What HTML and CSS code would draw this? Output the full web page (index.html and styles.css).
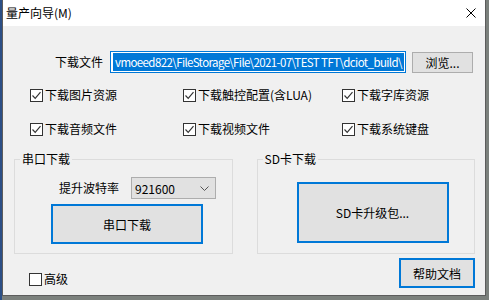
FILE: index.html
```html
<!DOCTYPE html>
<html lang="zh-CN">
<head>
<meta charset="utf-8">
<title>量产向导</title>
<link rel="stylesheet" href="styles.css">
</head>
<body>
<div class="window">
  <div class="titlebar">
    <span class="title">量产向导(M)</span>
    <svg class="close" width="10" height="10" viewBox="0 0 10 10"><path d="M0.5 0.5 L9.5 9.5 M9.5 0.5 L0.5 9.5" stroke="#000" stroke-width="1" fill="none"/></svg>
  </div>
  <div class="content">
    <div class="file-row">
      <span class="file-label">下载文件</span>
      <div class="file-input"><span class="sel">vmoeed822\FileStorage\File\2021-07\TEST TFT\dciot_build\</span></div>
      <div class="btn browse">浏览...</div>
    </div>
    <div class="checks">
      <label class="check"><span class="box checked"><svg width="11" height="11" viewBox="0 0 11 11"><path d="M1.5 5.5 L4.2 8.3 L9.5 2.2" stroke="#333" stroke-width="1.2" fill="none"/></svg></span>下载图片资源</label>
      <label class="check"><span class="box checked"><svg width="11" height="11" viewBox="0 0 11 11"><path d="M1.5 5.5 L4.2 8.3 L9.5 2.2" stroke="#333" stroke-width="1.2" fill="none"/></svg></span>下载触控配置(含LUA)</label>
      <label class="check"><span class="box checked"><svg width="11" height="11" viewBox="0 0 11 11"><path d="M1.5 5.5 L4.2 8.3 L9.5 2.2" stroke="#333" stroke-width="1.2" fill="none"/></svg></span>下载字库资源</label>
      <label class="check"><span class="box checked"><svg width="11" height="11" viewBox="0 0 11 11"><path d="M1.5 5.5 L4.2 8.3 L9.5 2.2" stroke="#333" stroke-width="1.2" fill="none"/></svg></span>下载音频文件</label>
      <label class="check"><span class="box checked"><svg width="11" height="11" viewBox="0 0 11 11"><path d="M1.5 5.5 L4.2 8.3 L9.5 2.2" stroke="#333" stroke-width="1.2" fill="none"/></svg></span>下载视频文件</label>
      <label class="check"><span class="box checked"><svg width="11" height="11" viewBox="0 0 11 11"><path d="M1.5 5.5 L4.2 8.3 L9.5 2.2" stroke="#333" stroke-width="1.2" fill="none"/></svg></span>下载系统键盘</label>
    </div>
    <div class="groups">
      <div class="group">
        <span class="group-title">串口下载</span>
        <div class="baud-row">
          <span class="baud-label">提升波特率</span>
          <div class="combo"><span>921600</span><svg width="9" height="5" viewBox="0 0 9 5"><path d="M0.5 0.5 L4.5 4.5 L8.5 0.5" stroke="#555" stroke-width="1" fill="none"/></svg></div>
        </div>
        <div class="btn big serial">串口下载</div>
      </div>
      <div class="group">
        <span class="group-title">SD卡下载</span>
        <div class="btn big sd">SD卡升级包...</div>
      </div>
    </div>
    <div class="bottom-row">
      <label class="check adv"><span class="box plain"></span>高级</label>
      <div class="btn help">帮助文档</div>
    </div>
  </div>
</div>
</body>
</html>
```
FILE: styles.css
```css
* { box-sizing: border-box; }
html, body { margin: 0; padding: 0; }
body {
  width: 489px;
  height: 300px;
  overflow: hidden;
  background: linear-gradient(to right, #2c4f86 0, #2c4f86 2px, #7b807c 2px);
  font-family: "Noto Sans CJK SC", "Noto Sans", sans-serif;
  font-size: 12px;
  color: #000;
}
.window {
  margin-left: 2px;
  width: 484px;
  height: 296px;
  border: 1px solid #5c5c5c;
  border-top: none;
  background: #f0f0f0;
  display: flex;
  flex-direction: column;
}
.titlebar {
  height: 26px;
  background: #fff;
  display: flex;
  align-items: center;
  justify-content: space-between;
  padding: 0 9px 0 3px;
}
.title { line-height: 16px; }
.close { display: block; }
.content {
  flex: 1;
  padding: 25px 10px 0 11px;
}
.file-row {
  display: flex;
  align-items: center;
  height: 22px;
  padding-left: 41px;
}
.file-label { width: 48px; line-height: 16px; }
.file-input {
  margin-left: 7px;
  width: 296px;
  height: 22px;
  border: 1px solid #0078d7;
  background: #fff;
  padding: 1px 1px 1px 2px;
  overflow: hidden;
  white-space: nowrap;
}
.sel {
  display: block;
  width: 100%;
  height: 18px;
  line-height: 18px;
  background: #0078d7;
  color: #fff;
  padding-left: 2px;
  font-size: 11.5px;
  letter-spacing: -0.6px;
  overflow: hidden;
  white-space: nowrap;
}
.btn {
  display: flex;
  align-items: center;
  justify-content: center;
  background: #e1e1e1;
  border: 1px solid #adadad;
}
.browse {
  margin-left: 6px;
  width: 61px;
  height: 21px;
}
.checks {
  display: grid;
  grid-template-columns: 153px 159px auto;
  row-gap: 20px;
  margin-top: 15px;
  padding-left: 16px;
}
.check {
  display: flex;
  align-items: center;
  height: 14px;
  line-height: 14px;
  white-space: nowrap;
}
.box {
  width: 13px;
  height: 13px;
  border: 1px solid #333;
  background: #fff;
  margin-right: 2px;
  display: flex;
  align-items: center;
  justify-content: center;
}
.box svg { display: block; }
.groups {
  display: flex;
  gap: 24px;
  margin-top: 23px;
}
.group {
  width: 219px;
  height: 95px;
  border: 1px solid #dcdcdc;
  display: flex;
  flex-direction: column;
}
.group-title {
  align-self: flex-start;
  margin: -9px 0 0 5px;
  padding: 0 2px;
  height: 16px;
  line-height: 16px;
  background: #f0f0f0;
}
.baud-row {
  display: flex;
  align-items: center;
  margin-top: 10px;
  padding-left: 44px;
  height: 22px;
}
.baud-label { width: 60px; line-height: 16px; }
.combo {
  margin-left: 12px;
  width: 85px;
  height: 22px;
  border: 1px solid #adadad;
  background: #e1e1e1;
  display: flex;
  align-items: center;
  justify-content: space-between;
  padding: 0 6px 0 3px;
}
.combo svg { display: block; }
.big {
  border: 2px solid #0078d7;
  width: 152px;
}
.serial {
  margin: 5px 0 0 36px;
  height: 40px;
}
.sd {
  margin: 15px 0 0 39px;
  height: 61px;
}
.bottom-row {
  display: flex;
  justify-content: space-between;
  align-items: flex-start;
  margin-top: 4px;
}
.adv { margin: 14px 0 0 15px; }
.box.plain { width: 13px; height: 13px; }
.help {
  width: 76px;
  height: 30px;
  border: 2px solid #0078d7;
}
```
